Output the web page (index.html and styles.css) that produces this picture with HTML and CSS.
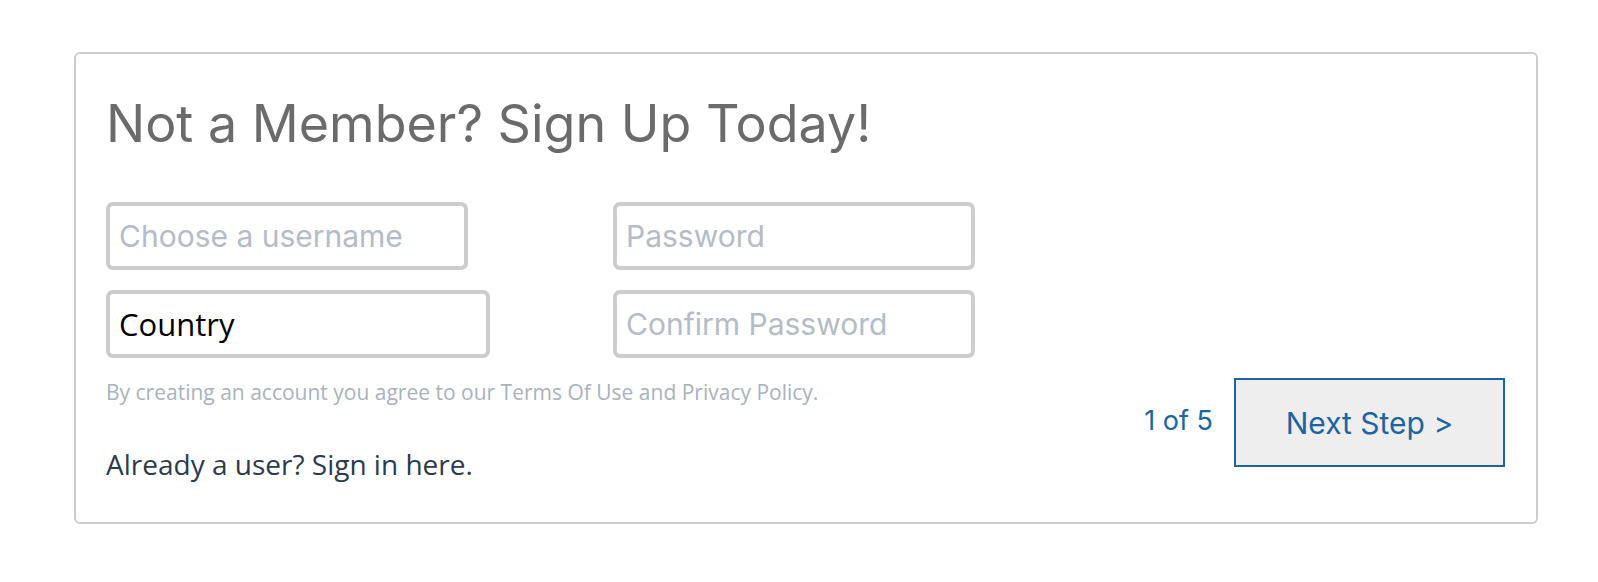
FILE: index.html
```html
<!DOCTYPE html>
<html lang="en">
<head>
    <meta charset="UTF-8">
    <meta name="viewport" content="width=device-width, initial-scale=1.0">
    <title>Sign Up</title>
    <link rel="stylesheet" href="styles.css">
</head>
<body>
    <div class="signup-box">
        <h1>Not a Member? Sign Up Today!</h1>

        <div class="fields">
            <input type="text" class="field" placeholder="Choose a username">
            <input type="password" class="field" placeholder="Password">
            <input type="text" class="field field-wide" value="Country">
            <input type="password" class="field" placeholder="Confirm Password">
        </div>

        <div class="footer-row">
            <div class="footer-text">
                <p class="terms">By creating an account you agree to our Terms Of Use and Privacy Policy.</p>
                <p class="signin">Already a user? Sign in here.</p>
            </div>
            <div class="step-nav">
                <span class="step-count">1 of 5</span>
                <button class="next-btn">Next Step &gt;</button>
            </div>
        </div>
    </div>
</body>
</html>
```

FILE: styles.css
```css
body {
    margin: 0;
    padding: 52px 60px 0 74px;
    background-color: #fff;
    font-family: "Open Sans", Arial, sans-serif;
}

.signup-box {
    border: 2px solid #cccccc;
    border-radius: 6px;
    height: 472px;
    box-sizing: border-box;
    padding: 0 31px 0 30px;
}

h1 {
    font-family: Inter, "Liberation Sans", sans-serif;
    font-weight: 400;
    font-size: 52px;
    line-height: 60px;
    color: #6b6b6b;
    margin: 40px 0 0 0;
}

.fields {
    display: grid;
    grid-template-columns: 507px 400px;
    row-gap: 20px;
    margin-top: 48px;
}

.field {
    box-sizing: border-box;
    width: 362px;
    height: 68px;
    border: 4px solid #cccccc;
    border-radius: 7px;
    padding: 0 9px;
    font-family: Inter, "Liberation Sans", sans-serif;
    font-size: 30px;
    color: #000;
    outline: none;
}

.field::placeholder {
    color: #b4bcc6;
}

.field-wide {
    width: 384px;
    font-family: "Open Sans", sans-serif;
    font-size: 31px;
}

.footer-row {
    display: flex;
    justify-content: space-between;
    align-items: flex-start;
    margin-top: 19px;
}

.footer-text p {
    margin: 0;
}

.terms {
    font-size: 21px;
    color: #aab2bb;
    line-height: 30px;
}

.footer-text .signin {
    font-size: 28px;
    color: #2b3b4c;
    margin-top: 39px;
    line-height: 36px;
}

.step-nav {
    display: flex;
    align-items: center;
    gap: 21px;
    margin-top: 1px;
}

.step-count {
    font-family: Inter, "Liberation Sans", sans-serif;
    font-size: 27px;
    color: #1d64a0;
    margin-bottom: 5px;
}

.next-btn {
    width: 271px;
    height: 89px;
    border: 2px solid #1d64a0;
    background-color: #eeeeee;
    color: #1d64a0;
    font-family: Inter, "Liberation Sans", sans-serif;
    font-size: 30px;
    cursor: pointer;
}
```
